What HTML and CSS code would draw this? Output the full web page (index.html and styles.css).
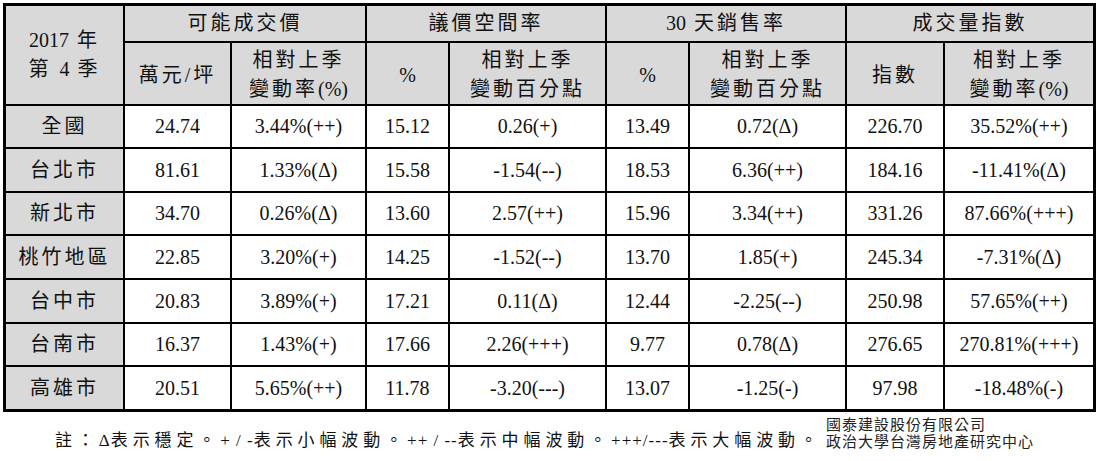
FILE: index.html
```html
<!DOCTYPE html>
<html lang="zh-Hant">
<head>
  <meta charset="UTF-8" />
  <title>2017 年第 4 季 住宅指數</title>
  <link rel="stylesheet" href="styles.css">
</head>
<body>

<div class="wrap">
  <table class="tbl">
    <colgroup>
      <col class="c1"><col class="c2"><col class="c3"><col class="c4"><col class="c5">
      <col class="c4"><col class="c5"><col class="c8"><col class="c9">
    </colgroup>
    <thead>
      <tr class="h1">
        <th rowspan="2" class="cj"><span class="n">2017</span> 年<br>第 <span class="n">4</span> 季</th>
        <th colspan="2" class="cj">可能成交價</th>
        <th colspan="2" class="cj">議價空間率</th>
        <th colspan="2" class="cj"><span class="n">30</span> 天銷售率</th>
        <th colspan="2" class="cj">成交量指數</th>
      </tr>
      <tr class="h2">
        <th class="cj">萬元/坪</th>
        <th class="cj">相對上季<br>變動率<span class="n">(%)</span></th>
        <th>%</th>
        <th class="cj">相對上季<br>變動百分點</th>
        <th>%</th>
        <th class="cj">相對上季<br>變動百分點</th>
        <th class="cj">指數</th>
        <th class="cj">相對上季<br>變動率<span class="n">(%)</span></th>
      </tr>
    </thead>
    <tbody id="rows"></tbody>
  </table>

  <div class="foot">
    <p class="note">註：<span class="n">Δ</span>表示穩定。<span class="n">+ / -</span>表示小幅波動。<span class="n">++ / --</span>表示中幅波動。<span class="n">+++/---</span>表示大幅波動。</p>
    <p class="src">國泰建設股份有限公司<br>政治大學台灣房地產研究中心</p>
  </div>
</div>

<script>
const data = [
  ["全國", "24.74", "3.44%(++)", "15.12", "0.26(+)", "13.49", "0.72(Δ)", "226.70", "35.52%(++)"],
  ["台北市", "81.61", "1.33%(Δ)", "15.58", "-1.54(--)", "18.53", "6.36(++)", "184.16", "-11.41%(Δ)"],
  ["新北市", "34.70", "0.26%(Δ)", "13.60", "2.57(++)", "15.96", "3.34(++)", "331.26", "87.66%(+++)"],
  ["桃竹地區", "22.85", "3.20%(+)", "14.25", "-1.52(--)", "13.70", "1.85(+)", "245.34", "-7.31%(Δ)"],
  ["台中市", "20.83", "3.89%(+)", "17.21", "0.11(Δ)", "12.44", "-2.25(--)", "250.98", "57.65%(++)"],
  ["台南市", "16.37", "1.43%(+)", "17.66", "2.26(+++)", "9.77", "0.78(Δ)", "276.65", "270.81%(+++)"],
  ["高雄市", "20.51", "5.65%(++)", "11.78", "-3.20(---)", "13.07", "-1.25(-)", "97.98", "-18.48%(-)"],
];
const heights = [43, 44, 43, 44, 44, 43, 42];

const tbody = document.getElementById('rows');
data.forEach((row, i) => {
  const tr = document.createElement('tr');
  tr.style.height = heights[i] + 'px';
  tr.innerHTML = `<th class="cj">${row[0]}</th>` +
    row.slice(1).map(v => `<td>${v}</td>`).join('');
  tbody.appendChild(tr);
});
</script>
</body>
</html>
```

FILE: styles.css
```css
* { margin: 0; padding: 0; box-sizing: border-box; }
body {
  font-family: 'Liberation Serif', 'Noto Sans CJK TC', serif;
  background: #fff;
  color: #111;
}
.wrap {
  padding: 3px 0 0 3px;
  width: 1100px;
}
.tbl {
  border-collapse: separate;
  border-spacing: 0;
  border: 3px solid #000;
  table-layout: fixed;
  width: 1093px;
}
.c1 { width: 119px; }
.c2 { width: 107px; }
.c3 { width: 135px; }
.c4 { width: 83px; }
.c5 { width: 157px; }
.c8 { width: 98px; }
.c9 { width: 148px; }

.tbl th,
.tbl td {
  border-right: 2px solid #000;
  border-bottom: 2px solid #000;
  text-align: center;
  vertical-align: middle;
  font-size: 20px;
  font-weight: normal;
  line-height: 29px;
  padding: 0;
}
.tbl th:last-child,
.tbl td:last-child { border-right: none; }
.tbl tbody tr:last-child th,
.tbl tbody tr:last-child td { border-bottom: none; }

.tbl th { background: #d9d9d9; }
.tbl td { background: #fff; }

.h1 { height: 37px; }
.h2 { height: 63px; }
.h2 th { padding-top: 3px; }

.cj { letter-spacing: 3px; }
.n { letter-spacing: 0; }

.foot {
  display: flex;
  align-items: flex-end;
  padding: 3px 0 0 52px;
}
.note {
  font-size: 17px;
  letter-spacing: 4.9px;
  line-height: 22px;
  white-space: nowrap;
  width: 771px;
}
.note .n { letter-spacing: 1px; }
.src {
  font-family: 'Noto Sans CJK TC', sans-serif;
  font-size: 15px;
  line-height: 17px;
  letter-spacing: 1px;
  color: #222;
  padding-bottom: 3px;
}
```
